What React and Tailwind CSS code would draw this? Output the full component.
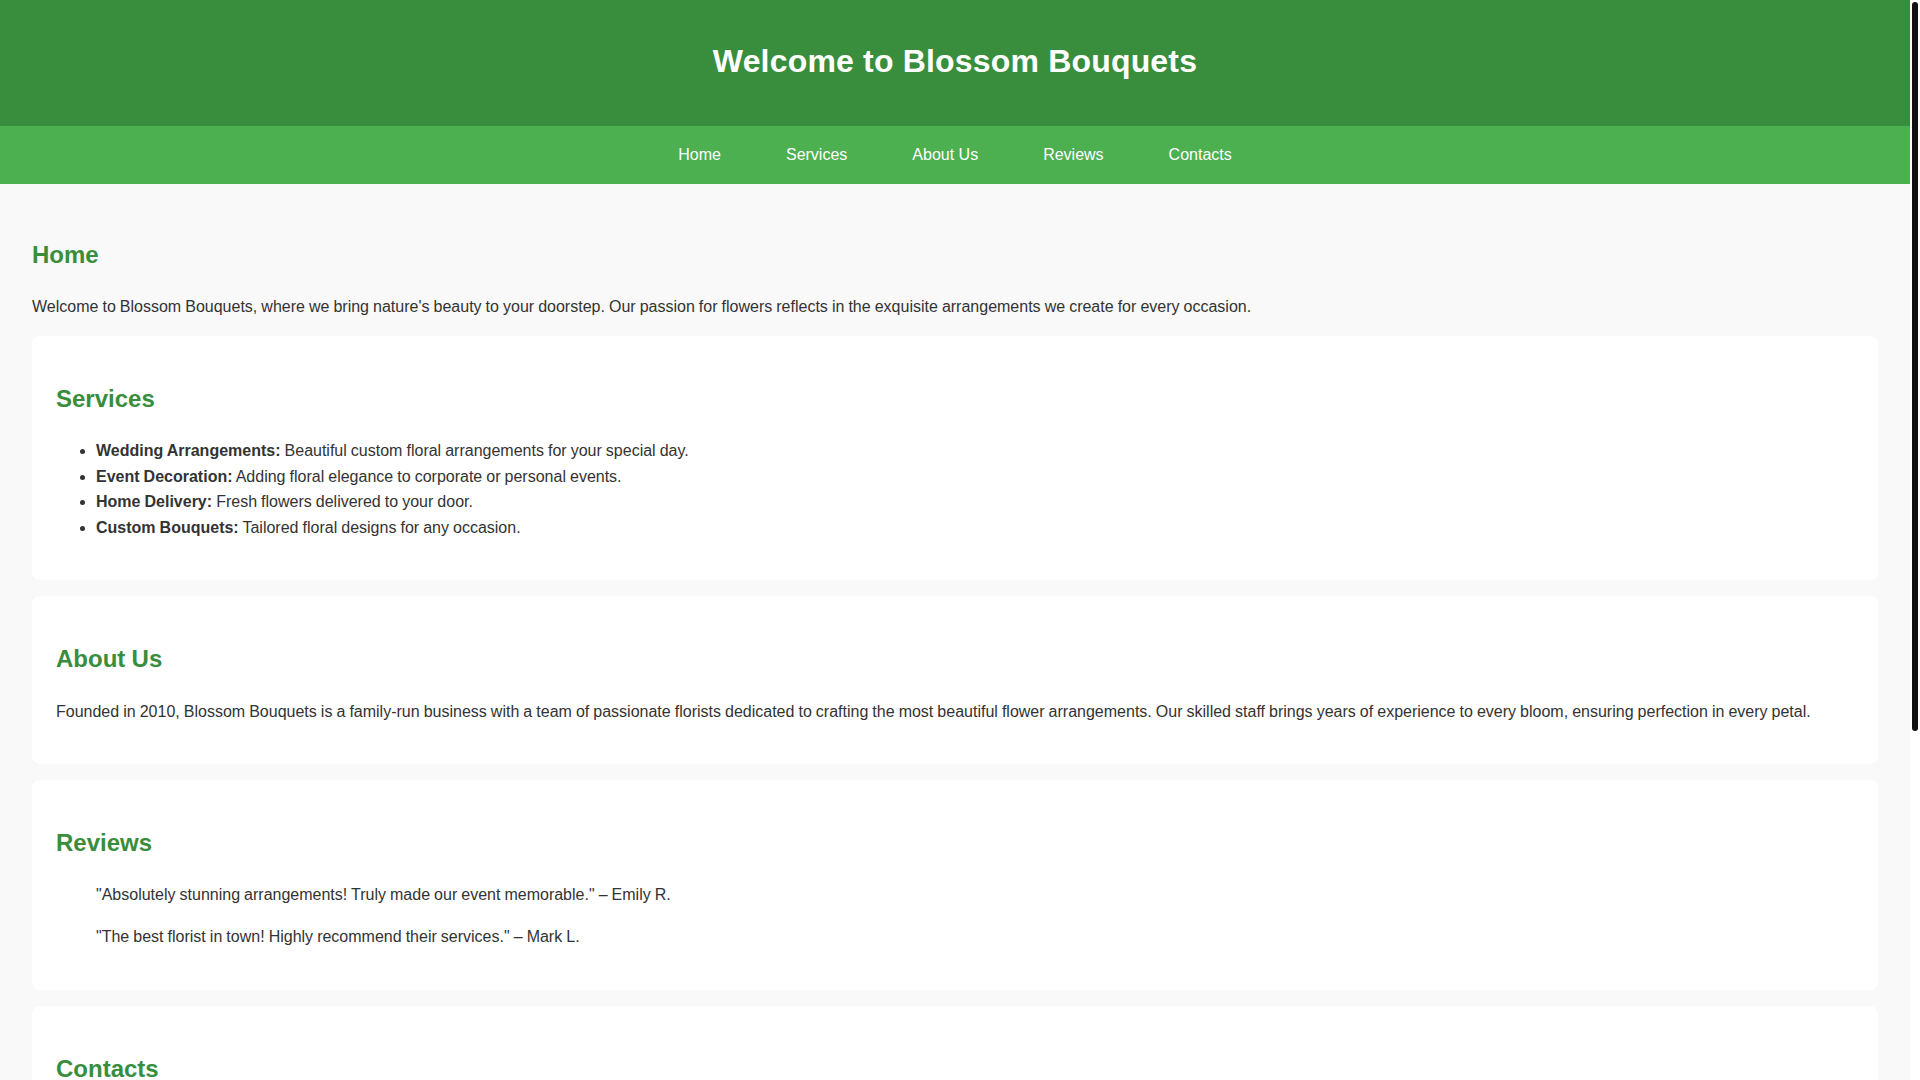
import React from "react";

const navItems = ["Home", "Services", "About Us", "Reviews", "Contacts"];

function Card({ title, children }) {
  return (
    <section className="bg-white rounded-lg p-6 mb-4">
      <h2 className="text-[24px] font-bold text-[#388e3c] leading-[38.4px] mt-[19.92px] mb-[19.92px]">
        {title}
      </h2>
      {children}
    </section>
  );
}

export default function App() {
  return (
    <div className="flex min-h-screen bg-white">
      <div className="flex-1 min-w-0 bg-[#f9f9f9] text-[#333] text-[16px] leading-[1.6] font-['Liberation_Sans',Arial,Helvetica,sans-serif]">
        <header className="bg-[#388e3c] text-white text-center h-[126px] pt-[43px]">
          <h1 className="text-[32px] font-bold leading-[37px] tracking-[0.18px]">Welcome to Blossom Bouquets</h1>
        </header>
        <nav className="bg-[#4caf50] h-[58px] flex items-center justify-center gap-[65px]">
          {navItems.map((item) => (
            <a key={item} href={`#${item.toLowerCase().replace(" ", "")}`} className="text-white text-[16px] leading-[25.6px]">
              {item}
            </a>
          ))}
        </nav>
        <main className="p-8 [word-spacing:-0.4px]">
          <section id="home">
            <h2 className="text-[24px] font-bold text-[#388e3c] leading-[38.4px] mt-[19.92px] mb-[19.92px]">Home</h2>
            <p className="mb-4">
              Welcome to Blossom Bouquets, where we bring nature's beauty to your doorstep. Our passion for flowers reflects in the exquisite arrangements we create for every occasion.
            </p>
          </section>

          <Card title="Services">
            <ul className="list-disc pl-10 mb-4">
              <li>
                <strong>Wedding Arrangements:</strong> Beautiful custom floral arrangements for your special day.
              </li>
              <li>
                <strong>Event Decoration:</strong> Adding floral elegance to corporate or personal events.
              </li>
              <li>
                <strong>Home Delivery:</strong> Fresh flowers delivered to your door.
              </li>
              <li>
                <strong>Custom Bouquets:</strong> Tailored floral designs for any occasion.
              </li>
            </ul>
          </Card>

          <Card title="About Us">
            <p className="mb-4">
              Founded in 2010, Blossom Bouquets is a family-run business with a team of passionate florists dedicated to crafting the most beautiful flower arrangements. Our skilled staff brings years of experience to every bloom, ensuring perfection in every petal.
            </p>
          </Card>

          <Card title="Reviews">
            <blockquote className="mx-10 my-4">
              "Absolutely stunning arrangements! Truly made our event memorable." – Emily R.
            </blockquote>
            <blockquote className="mx-10 my-4">
              "The best florist in town! Highly recommend their services." – Mark L.
            </blockquote>
          </Card>

          <Card title="Contacts">
            <p className="mb-4">
              <strong>Phone:</strong> (555) 123-4567
            </p>
            <p className="mb-4">
              <strong>Email:</strong> info@blossombouquets.com
            </p>
            <p className="mb-4">
              <strong>Address:</strong> 123 Flower Lane, Garden City
            </p>
            <form className="flex flex-col gap-[10px] mb-4">
              <input className="border border-[#ccc] rounded px-[10px] h-[40px] bg-white" placeholder="Your Name" />
              <input className="border border-[#ccc] rounded px-[10px] h-[40px] bg-white" placeholder="Your Email" />
              <textarea className="border border-[#ccc] rounded px-[10px] py-2 h-[65px] bg-white" placeholder="Your Message" />
              <button type="button" className="self-start bg-[#4caf50] text-white rounded px-5 h-[40px]">Send Message</button>
            </form>
          </Card>
        </main>
        <footer className="bg-[#388e3c] text-white text-center py-4">
          © 2024 Blossom Bouquets. All rights reserved.
        </footer>
      </div>
      <div className="w-[10px] shrink-0 bg-white" aria-hidden="true">
        <div className="sticky top-[2px] mt-[2px] mx-[2px] h-[729px] rounded-full bg-[#111]"></div>
      </div>
    </div>
  );
}
